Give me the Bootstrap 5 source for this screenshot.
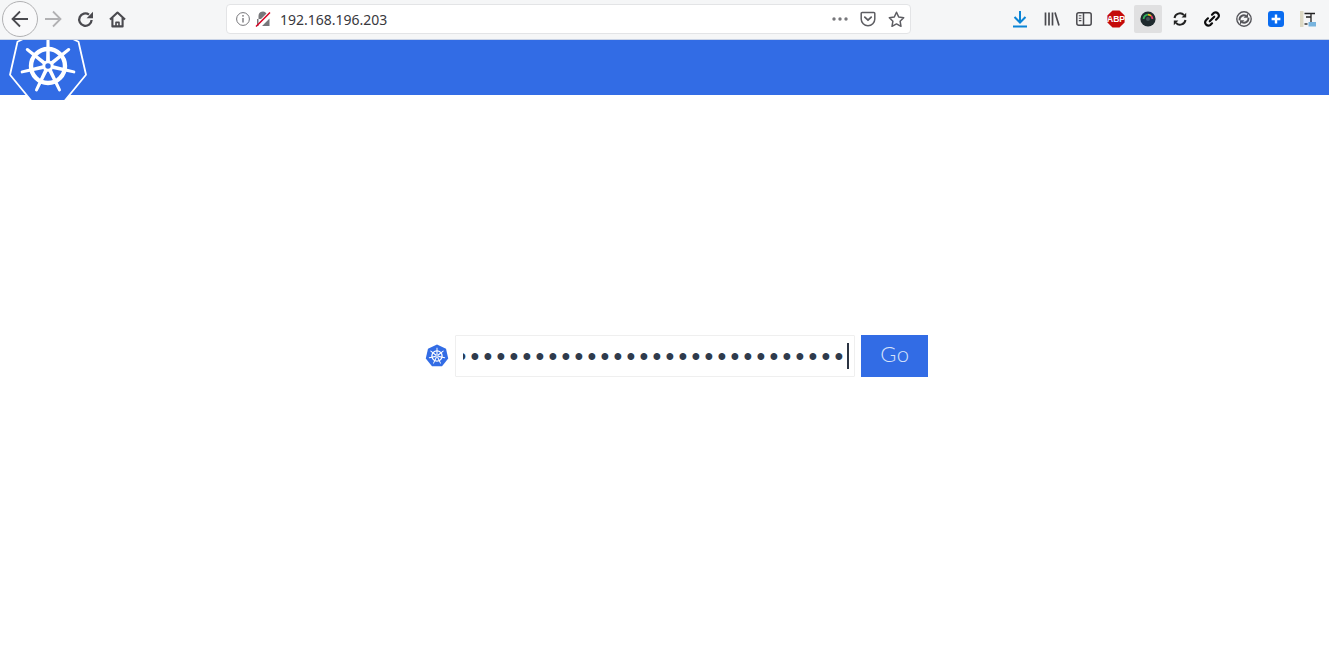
<!DOCTYPE html>
<html lang="en">
<head>
  <meta charset="UTF-8">
  <meta name="viewport" content="width=device-width, initial-scale=1.0">
  <title>Kubernetes Login</title>
  <link href="https://cdn.jsdelivr.net/npm/bootstrap@5.3.0/dist/css/bootstrap.min.css" rel="stylesheet">
  <style>
    body { background: #fff; overflow: hidden; }
    .browser-bar {
      height: 40px;
      background: #f5f6f7;
      border-bottom: 1px solid #c9d3e6;
      padding: 0 5px 1px 2px;
      position: relative;
      z-index: 2;
    }
    .tool-btn {
      width: 32px;
      height: 28px;
      flex: none;
    }
    .tool-btn svg { display: block; }
    .tool-back {
      width: 36px;
      height: 36px;
      margin-right: -1px;
      border: 1px solid #b1b1b3;
      border-radius: 50%;
      background: #f9f9fa;
    }
    .tool-active {
      width: 28px;
      margin: 0 2px;
      background: #e0e0e1;
      border-radius: 2px;
    }
    .url-box {
      width: 685px;
      height: 30px;
      margin-left: 93px;
      background: #fff;
      border: 1px solid #e3e4e6;
      border-radius: 4px;
      padding: 0 0 0 8px;
      font: 14px "Noto Sans", sans-serif;
      color: #38383d;
    }
    .url-text { margin-left: 9px; }
    .url-action { width: 28px; height: 28px; flex: none; }
    .kube-header {
      height: 55px;
      background: #326ce5;
      position: relative;
    }
    .kube-logo {
      position: absolute;
      left: -2px;
      top: -24px;
      width: 100px;
      height: 100px;
    }
    .login-row {
      padding: 240px 0 0 24px;
      gap: 6px;
    }
    .kube-small { width: 24px; height: 24px; flex: none; }
    .token-form { gap: 6px; margin-right: 1px; }
    .token-wrap {
      width: 400px;
      height: 42px;
      position: relative;
    }
    .token-input.form-control {
      width: 100%;
      height: 100%;
      border: 1px solid #efefef;
      border-radius: 1px;
      padding: 0 6px 0 7px;
      direction: rtl;
      font: 25px "Liberation Sans", sans-serif;
      letter-spacing: 4.25px;
      color: #2f3b4c;
      background: #fff;
      box-shadow: none;
    }
    .token-caret {
      position: absolute;
      left: 392px;
      top: 8px;
      width: 2px;
      height: 26px;
      background: #2b3442;
    }
    .go-btn.btn {
      width: 67px;
      height: 42px;
      padding: 0 0 5px 2px;
      border: 0;
      border-radius: 0;
      background: #326ce5;
      color: #d6e2fa;
      font: 300 22px Lato, sans-serif;
      letter-spacing: .5px;
    }
  </style>
</head>
<body>

  <svg width="0" height="0" class="position-absolute">
    <defs>
      <path id="spoke" d="M-1.9-5 L-1.5-26.5 A1.5 1.5 0 0 1 1.5-26.5 L1.9-5Z" fill="#fff"/>
      <g id="wheel">
        <circle r="17" fill="none" stroke="#fff" stroke-width="4.4"/>
        <circle r="4.2" fill="none" stroke="#fff" stroke-width="3"/>
        <use href="#spoke"/>
        <use href="#spoke" transform="rotate(51.43)"/>
        <use href="#spoke" transform="rotate(102.86)"/>
        <use href="#spoke" transform="rotate(154.29)"/>
        <use href="#spoke" transform="rotate(205.71)"/>
        <use href="#spoke" transform="rotate(257.14)"/>
        <use href="#spoke" transform="rotate(308.57)"/>
      </g>
    </defs>
  </svg>

  <!-- browser toolbar -->
  <div class="browser-bar d-flex align-items-center">
    <div class="tool-btn tool-back d-flex align-items-center justify-content-center">
      <svg width="20" height="20" viewBox="0 0 20 20" fill="none" stroke="#4a4a4f" stroke-width="1.8"><path d="M18 10H2.5M10 2.5 2.5 10l7.5 7.5"/></svg>
    </div>
    <div class="tool-btn d-flex align-items-center justify-content-center">
      <svg width="20" height="20" viewBox="0 0 20 20" fill="none" stroke="#b1b1b3" stroke-width="1.8"><path d="M2 10h15.5M10 2.5l7.5 7.5-7.5 7.5"/></svg>
    </div>
    <div class="tool-btn d-flex align-items-center justify-content-center">
      <svg width="17" height="17" viewBox="0 0 17 17" fill="none" stroke="#4a4a4f" stroke-width="2.3"><path d="M14.6 9A6.2 6.2 0 1 1 12 3.6"/><path d="M16 .8v6.4H9.6z" fill="#4a4a4f" stroke="none"/></svg>
    </div>
    <div class="tool-btn d-flex align-items-center justify-content-center">
      <svg width="17" height="17" viewBox="0 0 17 17" fill="none" stroke="#4a4a4f" stroke-width="2.1" stroke-linejoin="round"><path d="M1 8.6 8.5 1.6 16 8.6M3.4 7v8.4h10.2V7"/><path d="M7 15.4v-4h3v4" stroke-width="1.6"/></svg>
    </div>

    <div class="url-box d-flex align-items-center">
      <svg width="16" height="16" viewBox="0 0 16 16" fill="none" stroke="#77777b"><circle cx="8" cy="8" r="6.4"/><path d="M8 7v4.5" stroke-width="1.4"/><circle cx="8" cy="4.8" r=".9" fill="#77777b" stroke="none"/></svg>
      <svg class="ms-1" width="16" height="16" viewBox="0 0 16 16" fill="none"><path d="M3.5 7V5a4.4 4.4 0 0 1 8-2.5L6 8H2v7h1.5zM7 15h7.5V7.5z" fill="#77777b"/><path d="M1 15.5 15 1.5" stroke="#d70022" stroke-width="1.5"/></svg>
      <span class="url-text">192.168.196.203</span>
      <div class="d-flex align-items-center ms-auto">
        <div class="url-action d-flex align-items-center justify-content-center">
          <svg width="16" height="4" viewBox="0 0 16 4" fill="#77777b"><circle cx="2" cy="2" r="1.7"/><circle cx="8" cy="2" r="1.7"/><circle cx="14" cy="2" r="1.7"/></svg>
        </div>
        <div class="url-action d-flex align-items-center justify-content-center">
          <svg width="16" height="16" viewBox="0 0 16 16" fill="none" stroke="#5d5d62" stroke-width="1.5" stroke-linejoin="round"><path d="M2.2 1.5h11.6a1 1 0 0 1 1 1V8a6.8 6.8 0 0 1-13.6 0V2.5a1 1 0 0 1 1-1z"/><path d="M4.8 6.2 8 9.2l3.2-3" stroke-linecap="round" stroke-width="1.8"/></svg>
        </div>
        <div class="url-action d-flex align-items-center justify-content-center">
          <svg width="17" height="17" viewBox="0 0 17 17" fill="none" stroke="#5d5d62" stroke-width="1.5" stroke-linejoin="round"><path d="M8.5 1.3l2.2 4.7 5 .7-3.6 3.5.9 5.1-4.5-2.4L4 15.3l.9-5.1-3.6-3.5 5-.7z"/></svg>
        </div>
      </div>
    </div>

    <div class="d-flex align-items-center ms-auto">
      <div class="tool-btn d-flex align-items-center justify-content-center">
        <svg width="16" height="18" viewBox="0 0 16 18" fill="none" stroke="#0a84d6" stroke-width="2"><path d="M8 1v11M2.5 7 8 12.5 13.5 7M1 16.5h14"/></svg>
      </div>
      <div class="tool-btn d-flex align-items-center justify-content-center">
        <svg width="16" height="16" viewBox="0 0 16 16" fill="none" stroke="#4a4a4f" stroke-width="1.7"><path d="M1.5 1.5v13M5 1.5v13M8.5 1.5v13M11 1.6l4 12.9"/></svg>
      </div>
      <div class="tool-btn d-flex align-items-center justify-content-center">
        <svg width="16" height="14" viewBox="0 0 16 14" fill="none" stroke="#4a4a4f" stroke-width="1.5"><rect x=".8" y=".8" width="14.4" height="12.4" rx="2"/><path d="M7.5 1v12"/><path d="M2.8 3.8h2.6M2.8 6.2h2.6M2.8 8.6h2.6" stroke-width="1.1"/></svg>
      </div>
      <div class="tool-btn d-flex align-items-center justify-content-center">
        <svg width="18" height="18" viewBox="0 0 18 18"><path d="M5.5.4h7L17.6 5.5v7L12.5 17.6h-7L.4 12.5v-7z" fill="#c40a0a"/><text x="9" y="12.1" text-anchor="middle" font-family="Liberation Sans, sans-serif" font-weight="700" font-size="8.6" fill="#fff">ABP</text></svg>
      </div>
      <div class="tool-btn tool-active d-flex align-items-center justify-content-center">
        <svg width="16" height="16" viewBox="0 0 16 16" fill="none"><circle cx="8" cy="8" r="7.6" fill="#1f2a2e"/><path d="M3.6 8a4.4 4.4 0 0 1 4.4-4.4" stroke="#2fb35a" stroke-width="1.8"/><path d="M8 3.6a4.4 4.4 0 0 1 3.1 1.3" stroke="#e8c21e" stroke-width="1.8"/><path d="M11.1 4.9A4.4 4.4 0 0 1 12.4 8" stroke="#e03c6a" stroke-width="1.8"/><circle cx="8" cy="8" r="2" fill="#46565c"/></svg>
      </div>
      <div class="tool-btn d-flex align-items-center justify-content-center">
        <svg width="14" height="14" viewBox="0 0 14 14" fill="none" stroke="#222" stroke-width="2"><path d="M1.5 6A5.5 5.5 0 0 1 11 3.2M12.5 8A5.5 5.5 0 0 1 3 10.8"/><path d="M13.2.8v4.6H8.6z" fill="#222" stroke="none"/><path d="M.8 13.2V8.6h4.6z" fill="#222" stroke="none"/></svg>
      </div>
      <div class="tool-btn d-flex align-items-center justify-content-center">
        <svg width="18" height="18" viewBox="0 0 16 16" fill="none" stroke="#0c0c0d" stroke-width="1.9" stroke-linecap="round"><path d="M6 10 10 6"/><path d="M8 4.2 9.6 2.6a2.9 2.9 0 0 1 4 4L11.6 8.6"/><path d="M8 11.8 6.4 13.4a2.9 2.9 0 0 1-4-4L4.4 7.4"/></svg>
      </div>
      <div class="tool-btn d-flex align-items-center justify-content-center">
        <svg width="16" height="16" viewBox="0 0 16 16" fill="none" stroke="#55555a" stroke-width="1.4"><circle cx="8" cy="8" r="7.2"/><path d="M3.6 9.4a4.4 4.4 0 0 1 6.4-4.6M12.4 6.6a4.4 4.4 0 0 1-6.4 4.6" stroke-width="1.9"/><path d="M12 2.4v4.4H7.6zM4 13.6V9.2h4.4z" fill="#55555a" stroke="none"/></svg>
      </div>
      <div class="tool-btn d-flex align-items-center justify-content-center">
        <svg width="16" height="16" viewBox="0 0 16 16"><rect width="16" height="16" rx="3" fill="#0a6cf0"/><path d="M8 3.6v8.8M3.6 8h8.8" stroke="#fff" stroke-width="2.4"/></svg>
      </div>
      <div class="tool-btn d-flex align-items-center justify-content-center">
        <svg width="16" height="18" viewBox="0 0 16 18" fill="none"><rect x="0" y="1" width="3.5" height="16" fill="#ddd9c4"/><path d="M4.5 3.5H15M11 3.5V12M6 7h5" stroke="#222" stroke-width="1.3"/><rect x="8.5" y="12" width="7.5" height="4.5" fill="#78b4de"/><rect x="4.5" y="13" width="3" height="2" fill="#666"/></svg>
      </div>
    </div>
  </div>

  <!-- kubernetes header -->
  <header class="kube-header">
    <svg class="kube-logo" viewBox="-50 -50 100 100">
      <polygon points="0,-39 30.5,-24.3 38,8.7 16.5,35 -16.5,35 -38,8.7 -30.5,-24.3" fill="#326ce5" stroke="#fff" stroke-width="1.8" stroke-linejoin="round"/>
      <use href="#wheel"/>
    </svg>
  </header>

  <!-- login form -->
  <main class="login-row d-flex justify-content-center align-items-center">
    <svg class="kube-small" viewBox="-50 -50 100 100">
      <polygon points="0,-48 37.5,-30 46.8,10.7 20.8,43.2 -20.8,43.2 -46.8,10.7 -37.5,-30" fill="#326ce5"/>
      <use href="#wheel" transform="scale(1.25)"/>
    </svg>
    <form class="token-form d-flex" onsubmit="return false">
      <div class="token-wrap">
        <input class="token-input form-control" type="password" value="xxxxxxxxxxxxxxxxxxxxxxxxxxxxxxxxxxxxxxxxxxxxxxxxxxxxxxxxxxxx" aria-label="Token">
        <span class="token-caret"></span>
      </div>
      <button class="go-btn btn" type="submit">Go</button>
    </form>
  </main>

  <script src="https://cdn.jsdelivr.net/npm/bootstrap@5.3.0/dist/js/bootstrap.bundle.min.js"></script>
</body>
</html>
